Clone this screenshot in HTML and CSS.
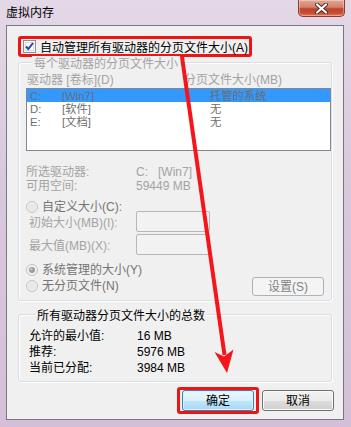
FILE: index.html
```html
<!DOCTYPE html>
<html lang="zh-CN">
<head>
<meta charset="utf-8">
<title>虚拟内存</title>
<link rel="stylesheet" href="styles.css">
</head>
<body>
<div class="window">
  <div class="titlebar">
    <span class="title">虚拟内存</span>
    <div class="close">
      <svg width="13" height="11" viewBox="0 0 13 11"><path d="M2 1.5 L11 9.5 M11 1.5 L2 9.5" stroke="#4a2a2a" stroke-width="4" stroke-linecap="round"/><path d="M2 1.5 L11 9.5 M11 1.5 L2 9.5" stroke="#ffffff" stroke-width="2.2" stroke-linecap="round"/></svg>
    </div>
  </div>
  <div class="client">
    <div class="hl-row">
      <span class="checkbox">
        <svg width="13" height="13" viewBox="0 0 13 13"><rect x="0.5" y="0.5" width="12" height="12" fill="#f6f6f6" stroke="#8e8f8f"/><rect x="2.5" y="2.5" width="8" height="8" fill="#fdfdfd" stroke="#d8dce2"/><path d="M3 6.5 L5.3 9 L10 3" fill="none" stroke="#25449a" stroke-width="2"/></svg>
      </span>
      <span class="hl-label">自动管理所有驱动器的分页文件大小(A)</span>
    </div>

    <div class="group g1">
      <div class="group-label dis">每个驱动器的分页文件大小</div>
      <div class="cols dis">
        <span>驱动器 [卷标](D)</span>
        <span>分页文件大小(MB)</span>
      </div>
      <div class="listbox">
        <div class="lrow sel"><span>C:</span><span>[Win7]</span><span>托管的系统</span></div>
        <div class="lrow"><span>D:</span><span>[软件]</span><span>无</span></div>
        <div class="lrow"><span>E:</span><span>[文档]</span><span>无</span></div>
      </div>
      <div class="info dis">
        <span>所选驱动器:</span><span>C:&nbsp;&nbsp;&nbsp;[Win7]</span>
        <span>可用空间:</span><span>59449 MB</span>
      </div>
      <div class="radio r-custom">
        <span class="rb"><svg width="12" height="12" viewBox="0 0 12 12"><circle cx="6" cy="6" r="5.5" fill="#f2f2f2" stroke="#c2c2c2"/><circle cx="6" cy="6" r="4" fill="#e8e8e8"/></svg></span>
        <span>自定义大小(C):</span>
      </div>
      <div class="field f1">
        <span class="dis">初始大小(MB)(I):</span>
        <span class="input"></span>
      </div>
      <div class="field f2">
        <span class="dis">最大值(MB)(X):</span>
        <span class="input"></span>
      </div>
      <div class="bottom">
        <div class="radios">
          <div class="radio">
            <span class="rb"><svg width="12" height="12" viewBox="0 0 12 12"><circle cx="6" cy="6" r="5.5" fill="#f2f2f2" stroke="#c2c2c2"/><circle cx="6" cy="6" r="3" fill="#9a9a9a"/><circle cx="5.3" cy="5.3" r="1.2" fill="#c8c8c8"/></svg></span>
            <span>系统管理的大小(Y)</span>
          </div>
          <div class="radio">
            <span class="rb"><svg width="12" height="12" viewBox="0 0 12 12"><circle cx="6" cy="6" r="5.5" fill="#f2f2f2" stroke="#c2c2c2"/><circle cx="6" cy="6" r="4" fill="#e8e8e8"/></svg></span>
            <span>无分页文件(N)</span>
          </div>
        </div>
        <span class="btn btn-dis">设置(S)</span>
      </div>
    </div>

    <div class="group g2">
      <div class="group-label">所有驱动器分页文件大小的总数</div>
      <div class="totals">
        <span>允许的最小值:</span><span>16 MB</span>
        <span>推荐:</span><span>5976 MB</span>
        <span>当前已分配:</span><span>3984 MB</span>
      </div>
    </div>

    <div class="buttons">
      <span class="ok-hl"><span class="btn btn-ok">确定</span></span>
      <span class="btn btn-cancel">取消</span>
    </div>
  </div>

  <svg class="arrow" width="351" height="427" viewBox="0 0 351 427">
    <line x1="182" y1="57" x2="224.5" y2="355" stroke="#f5151a" stroke-width="4"/>
    <polygon points="227,373 214.5,352 224,356.5 233.5,349.5" fill="#f5151a"/>
  </svg>
</div>
</body>
</html>
```
FILE: styles.css
```css
html, body {
  margin: 0;
  padding: 0;
}
body {
  width: 351px;
  height: 427px;
  overflow: hidden;
  font-family: "Liberation Sans", "Noto Sans CJK SC", sans-serif;
  font-size: 12px;
  color: #000;
}
.window {
  position: relative;
  width: 351px;
  height: 427px;
  background: linear-gradient(180deg, #e4d8e7 0%, #d9c9dd 40%, #d3c0d8 100%);
  box-sizing: border-box;
}
.titlebar {
  height: 25px;
  display: flex;
  justify-content: space-between;
  align-items: flex-start;
  padding-left: 6px;
}
.title {
  margin-top: 5px;
  line-height: 17px;
  font-size: 12px;
  color: #000;
}
.close {
  width: 47px;
  height: 17px;
  margin-right: 6px;
  box-sizing: border-box;
  border: 1px solid #8b3b33;
  border-top: none;
  border-radius: 0 0 5px 5px;
  background: linear-gradient(180deg, #e1a797 0%, #d2806c 45%, #c2432c 55%, #c84a30 80%, #dc7a5c 100%);
  display: flex;
  align-items: center;
  justify-content: center;
  box-shadow: inset 0 0 0 1px rgba(255,255,255,0.35);
}
.close svg { display: block; }

.client {
  margin-left: 6px;
  width: 338px;
  height: 395px;
  box-sizing: border-box;
  border: 1px solid #7a7682;
  background: #f0f0f0;
  padding: 10px 0 0 11px;
  display: flex;
  flex-direction: column;
}

.hl-row {
  width: 234px;
  height: 21px;
  box-sizing: border-box;
  border: 3px solid #ee1414;
  border-radius: 3px;
  display: flex;
  align-items: center;
  padding-left: 2px;
}
.checkbox { width: 13px; height: 13px; display: block; }
.checkbox svg { display: block; }
.hl-label {
  margin-left: 4px;
  line-height: 14px;
  margin-top: 3px;
  white-space: nowrap;
}

.group {
  width: 314px;
  box-sizing: border-box;
  border: 1px solid #d5dfe5;
  border-radius: 3px;
  box-shadow: inset 1px 1px 0 #fff, 1px 1px 0 #fff;
}
.group-label {
  width: fit-content;
  margin-top: -7px;
  margin-left: 6px;
  padding: 1px 2px 0;
  line-height: 14px;
  background: #f0f0f0;
  white-space: nowrap;
}
.dis { color: #a3a3a3; }

.g1 {
  margin-top: 5px;
  padding: 0 0 4px 7px;
}
.cols {
  margin-top: 2px;
  display: grid;
  grid-template-columns: 157px auto;
  line-height: 14px;
  padding-left: 1px;
  white-space: nowrap;
}
.listbox {
  margin-top: 1px;
  height: 63px;
  box-sizing: border-box;
  border: 1px solid #828790;
  background: #fff;
}
.lrow {
  height: 13px;
  line-height: 13px;
  font-size: 11.3px;
  display: grid;
  grid-template-columns: 32px 148px auto;
  padding-left: 3px;
  color: #6d6d6d;
  white-space: nowrap;
}
.lrow span { padding-top: 1px; }
.lrow.sel { background: #3399ff; }

.info {
  margin-top: 14px;
  display: grid;
  grid-template-columns: 110px auto;
  grid-auto-rows: 14px;
  line-height: 14px;
  white-space: nowrap;
}
.radio {
  display: flex;
  align-items: center;
  color: #747474;
  white-space: nowrap;
}
.rb { width: 12px; height: 12px; display: block; margin-right: 4px; }
.rb svg { display: block; }
.r-custom {
  margin-top: 7px;
  height: 14px;
  line-height: 14px;
}
.field {
  display: grid;
  align-items: center;
  padding-left: 3px;
  white-space: nowrap;
}
.f1 { margin-top: -3px; grid-template-columns: 107px 74px; }
.f2 { margin-top: 2px; grid-template-columns: 107px 74px; }
.input {
  display: block;
  height: 21px;
  box-sizing: border-box;
  border: 1px solid #b5b8bb;
  border-radius: 2px;
  background: #f2f2f2;
}
.bottom {
  margin-top: 7px;
  height: 34px;
  display: flex;
  justify-content: space-between;
  align-items: flex-end;
  padding-right: 7px;
}
.radios {
  align-self: flex-start;
  display: flex;
  flex-direction: column;
}
.radios .radio { height: 16px; line-height: 16px; }

.btn {
  display: flex;
  align-items: center;
  justify-content: center;
  box-sizing: border-box;
  border-radius: 3px;
  white-space: nowrap;
}
.btn-dis {
  width: 72px;
  height: 19px;
  border: 1px solid #adb2b5;
  background: #f4f4f4;
  color: #838383;
  line-height: 14px;
}

.g2 {
  margin-top: 13px;
  padding: 0 0 5px 10px;
}
.totals {
  margin-top: 5px;
  display: grid;
  grid-template-columns: 108px auto;
  grid-auto-rows: 16px;
  line-height: 16px;
  white-space: nowrap;
}

.buttons {
  margin-top: 5px;
  display: flex;
  align-items: center;
  justify-content: flex-end;
  padding-right: 9px;
  gap: 3px;
}
.ok-hl {
  display: flex;
  box-sizing: border-box;
  border: 3px solid #ee1414;
  border-radius: 3px;
  padding: 0 2px;
}
.btn-ok, .btn-cancel {
  width: 72px;
  height: 21px;
  line-height: 14px;
}
.btn-ok {
  border: 1px solid #3c7fb1;
  background: linear-gradient(180deg, #eaf6fd 0%, #d9f0fc 50%, #bee6fd 51%, #a7d9f5 100%);
  box-shadow: inset 0 0 0 1px #d9f3fd;
}
.btn-cancel {
  border: 1px solid #707070;
  background: linear-gradient(180deg, #f2f2f2 0%, #ebebeb 50%, #dddddd 51%, #cfcfcf 100%);
  box-shadow: inset 0 0 0 1px #fbfbfb;
}

.arrow {
  position: absolute;
  left: 0;
  top: 0;
  pointer-events: none;
}
```
